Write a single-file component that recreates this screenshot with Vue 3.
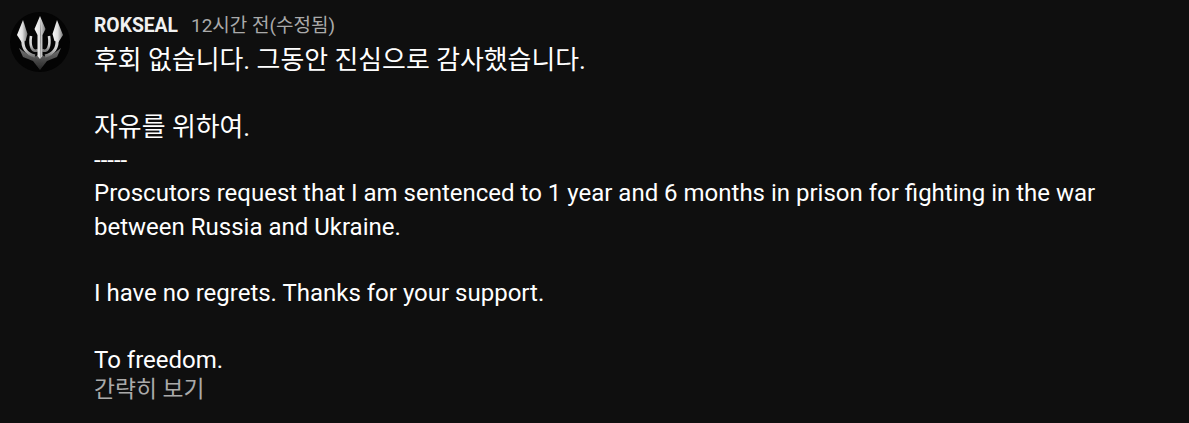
<script setup>
const paragraphs = [
  { text: '후회 없습니다. 그동안 진심으로 감사했습니다.', ko: true },
  { text: '', ko: false },
  { text: '자유를 위하여.', ko: true },
  { text: '-----', ko: false },
  { text: 'Proscutors request that I am sentenced to 1 year and 6 months in prison for fighting in the war between Russia and Ukraine.', ko: false },
  { text: '', ko: false },
  { text: 'I have no regrets. Thanks for your support.', ko: false },
  { text: '', ko: false },
  { text: 'To freedom.', ko: false }
]
</script>

<template>
  <div class="comment">
    <svg class="avatar" viewBox="0 0 60 60" aria-hidden="true">
      <defs>
        <linearGradient id="blade" x1="0" y1="0" x2="1" y2="0">
          <stop offset="0" stop-color="#f8f8f8" />
          <stop offset="0.5" stop-color="#e0e0e0" />
          <stop offset="1" stop-color="#777777" />
        </linearGradient>
        <linearGradient id="curve" x1="0" y1="0" x2="0" y2="1">
          <stop offset="0" stop-color="#e0e0e0" />
          <stop offset="0.6" stop-color="#d0d0d0" />
          <stop offset="1" stop-color="#7a7a7a" />
        </linearGradient>
        <linearGradient id="wing" x1="0" y1="0" x2="0" y2="1">
          <stop offset="0" stop-color="#777777" />
          <stop offset="1" stop-color="#262626" />
        </linearGradient>
        <filter id="soft"><feGaussianBlur stdDeviation="0.3" /></filter>
      </defs>
      <circle cx="30" cy="30" r="30" fill="#040404" />
      <g filter="url(#soft)">
        <path fill="url(#wing)" d="M9 36 L17 42 L24 45 L30 42 L36 45 L43 42 L51 36 L47 45 L37 49 L30 58 L23 49 L13 45 Z" />
        <path fill="none" stroke="url(#curve)" stroke-width="3.2" d="M13 26 C12 35 16 42 25 44" />
        <path fill="none" stroke="url(#curve)" stroke-width="3.2" d="M47 26 C48 35 44 42 35 44" />
        <path fill="none" stroke="url(#curve)" stroke-width="2.6" d="M21 24 C19.5 34 22 41 28 38" />
        <path fill="none" stroke="url(#curve)" stroke-width="2.6" d="M39 24 C40.5 34 38 41 32 38" />
        <path fill="url(#blade)" d="M30 4 L35.5 17 L32.5 23 L32.5 44 L30 47 L27.5 44 L27.5 23 L24.5 17 Z" />
        <path fill="url(#blade)" d="M13 8 L17.5 22 L15.5 29 L11.5 30 L7 23 Z" />
        <path fill="url(#blade)" d="M47 8 L53 23 L48.5 30 L44.5 29 L42.5 22 Z" />
        <path fill="#444444" d="M30 6 L30.5 20 L30.3 44 L30 52 Z" />
      </g>
    </svg>
    <div class="main">
      <div class="header">
        <span class="author">ROKSEAL</span>
        <span class="time">12시간 전(수정됨)</span>
      </div>
      <div class="body">
        <div v-for="(p, i) in paragraphs" :key="i" class="line" :class="{ ko: p.ko }">{{ p.text }}</div>
      </div>
      <div class="less">간략히 보기</div>
    </div>
  </div>
</template>

<style>
html, body {
  margin: 0;
  background: #0f0f0f;
}
</style>

<style scoped>
.comment {
  display: flex;
  align-items: flex-start;
  gap: 24px;
  width: 1189px;
  height: 423px;
  box-sizing: border-box;
  padding: 11px 0 0 10px;
  background: #0f0f0f;
  overflow: hidden;
  font-family: Roboto, "Noto Sans CJK KR", sans-serif;
}
.avatar {
  flex: none;
  width: 60px;
  height: 60px;
  margin-top: 1px;
}
.main {
  width: 1015px;
}
.header {
  display: flex;
  align-items: baseline;
  gap: 13px;
  height: 30px;
  line-height: 30px;
  font-size: 19.3px;
}
.author {
  color: #f1f1f1;
  font-weight: 700;
}
.time {
  color: #aaaaaa;
  font-size: 19px;
}
.body {
  color: #ffffff;
  font-size: 24px;
  line-height: 33.33px;
  margin-top: 3px;
}
.line {
  min-height: 33.33px;
}
.ko {
  font-size: 25.9px;
}
.less {
  color: #aaaaaa;
  font-size: 22.8px;
  line-height: 26px;
}
</style>
